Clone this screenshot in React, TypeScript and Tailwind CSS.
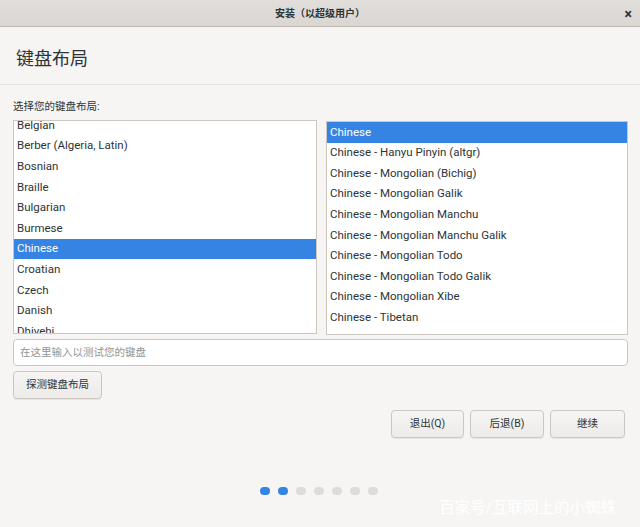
import React from "react";

const left = ["Belgian","Berber (Algeria, Latin)","Bosnian","Braille","Bulgarian","Burmese","Chinese","Croatian","Czech","Danish","Dhivehi"];
const right = ["Chinese","Chinese - Hanyu Pinyin (altgr)","Chinese - Mongolian (Bichig)","Chinese - Mongolian Galik","Chinese - Mongolian Manchu","Chinese - Mongolian Manchu Galik","Chinese - Mongolian Todo","Chinese - Mongolian Todo Galik","Chinese - Mongolian Xibe","Chinese - Tibetan"];

const font = { fontFamily: 'Roboto, "Noto Sans CJK SC", sans-serif' };

function List({ items, sel, offset }: { items: string[]; sel: string; offset: string }) {
  return (
    <div className="flex-1 h-[214px] border border-[#cdc7c2] bg-white overflow-hidden">
      <div className={offset}>
        {items.map((t) => (
          <div
            key={t}
            className={`h-[20.6px] flex items-center px-[3px] text-[11.5px] leading-none ${t === sel ? "bg-[#3584e4] text-white" : "text-[#2e3436]"}`}
          >
            {t}
          </div>
        ))}
      </div>
    </div>
  );
}

function Btn({ children, w }: { children: React.ReactNode; w: string }) {
  return (
    <div className={`${w} h-[28px] flex items-center justify-center rounded-[4px] border border-[#cdc7c2] bg-gradient-to-b from-[#f6f5f4] to-[#edebe9] text-[10.5px] text-[#2e3436] shadow-[0_1px_1px_rgba(0,0,0,0.07)]`}>
      {children}
    </div>
  );
}

export default function App() {
  return (
    <div className="w-[640px] h-[527px] bg-[#f6f5f4] flex flex-col relative overflow-hidden" style={font}>
      <div className="h-[27px] flex items-center justify-center relative bg-gradient-to-b from-[#e1dedb] to-[#dad6d2] border-b border-[#bfb8b1]">
        <span className="text-[10px] font-bold text-[#2e3436] mt-[1px]">安装（以超级用户）</span>
        <span className="absolute right-[8px] top-[4px] text-[14px] font-bold text-[#2e3436]">×</span>
      </div>
      <div className="h-[58px] flex items-center pl-[16px] pt-[6px] border-b border-[#e4e1de]">
        <span className="text-[18px] text-[#2e3436]">键盘布局</span>
      </div>
      <div className="px-[13px] pr-[12px] flex flex-col">
        <div className="h-[35px] flex items-end pb-[5px] text-[10.5px] text-[#2e3436]">选择您的键盘布局:</div>
        <div className="flex gap-[9px] items-start">
          <List items={left} sel="Chinese" offset="mt-[-5.8px]" />
          <div className="flex-1 flex mt-[1px]">
            <List items={right} sel="Chinese" offset="" />
          </div>
        </div>
        <div className="mt-[4px] h-[27px] rounded-[4px] border border-[#cdc7c2] bg-white flex items-center px-[6px] text-[10.5px] text-[#929595]">
          在这里输入以测试您的键盘
        </div>
        <div className="mt-[5px]">
          <Btn w="w-[89px]">探测键盘布局</Btn>
        </div>
        <div className="mt-[11px] flex justify-end gap-[6px] pr-[3px]">
          <Btn w="w-[73px]">退出(Q)</Btn>
          <Btn w="w-[74px]">后退(B)</Btn>
          <Btn w="w-[75px]">继续</Btn>
        </div>
      </div>
      <div className="absolute top-[487px] left-[260px] flex gap-[8px]">
        <div className="w-[10px] h-[8px] rounded-[4px] bg-[#3584e4]" />
        <div className="w-[10px] h-[8px] rounded-[4px] bg-[#3584e4]" />
        <div className="w-[10px] h-[8px] rounded-[4px] bg-[#dedbd8]" />
        <div className="w-[10px] h-[8px] rounded-[4px] bg-[#dedbd8]" />
        <div className="w-[10px] h-[8px] rounded-[4px] bg-[#dedbd8]" />
        <div className="w-[10px] h-[8px] rounded-[4px] bg-[#dedbd8]" />
        <div className="w-[10px] h-[8px] rounded-[4px] bg-[#dedbd8]" />
      </div>
      <div className="absolute left-[439px] top-[497px] text-[15.5px] text-white/90">百家号/互联网上的小蜘蛛</div>
    </div>
  );
}
